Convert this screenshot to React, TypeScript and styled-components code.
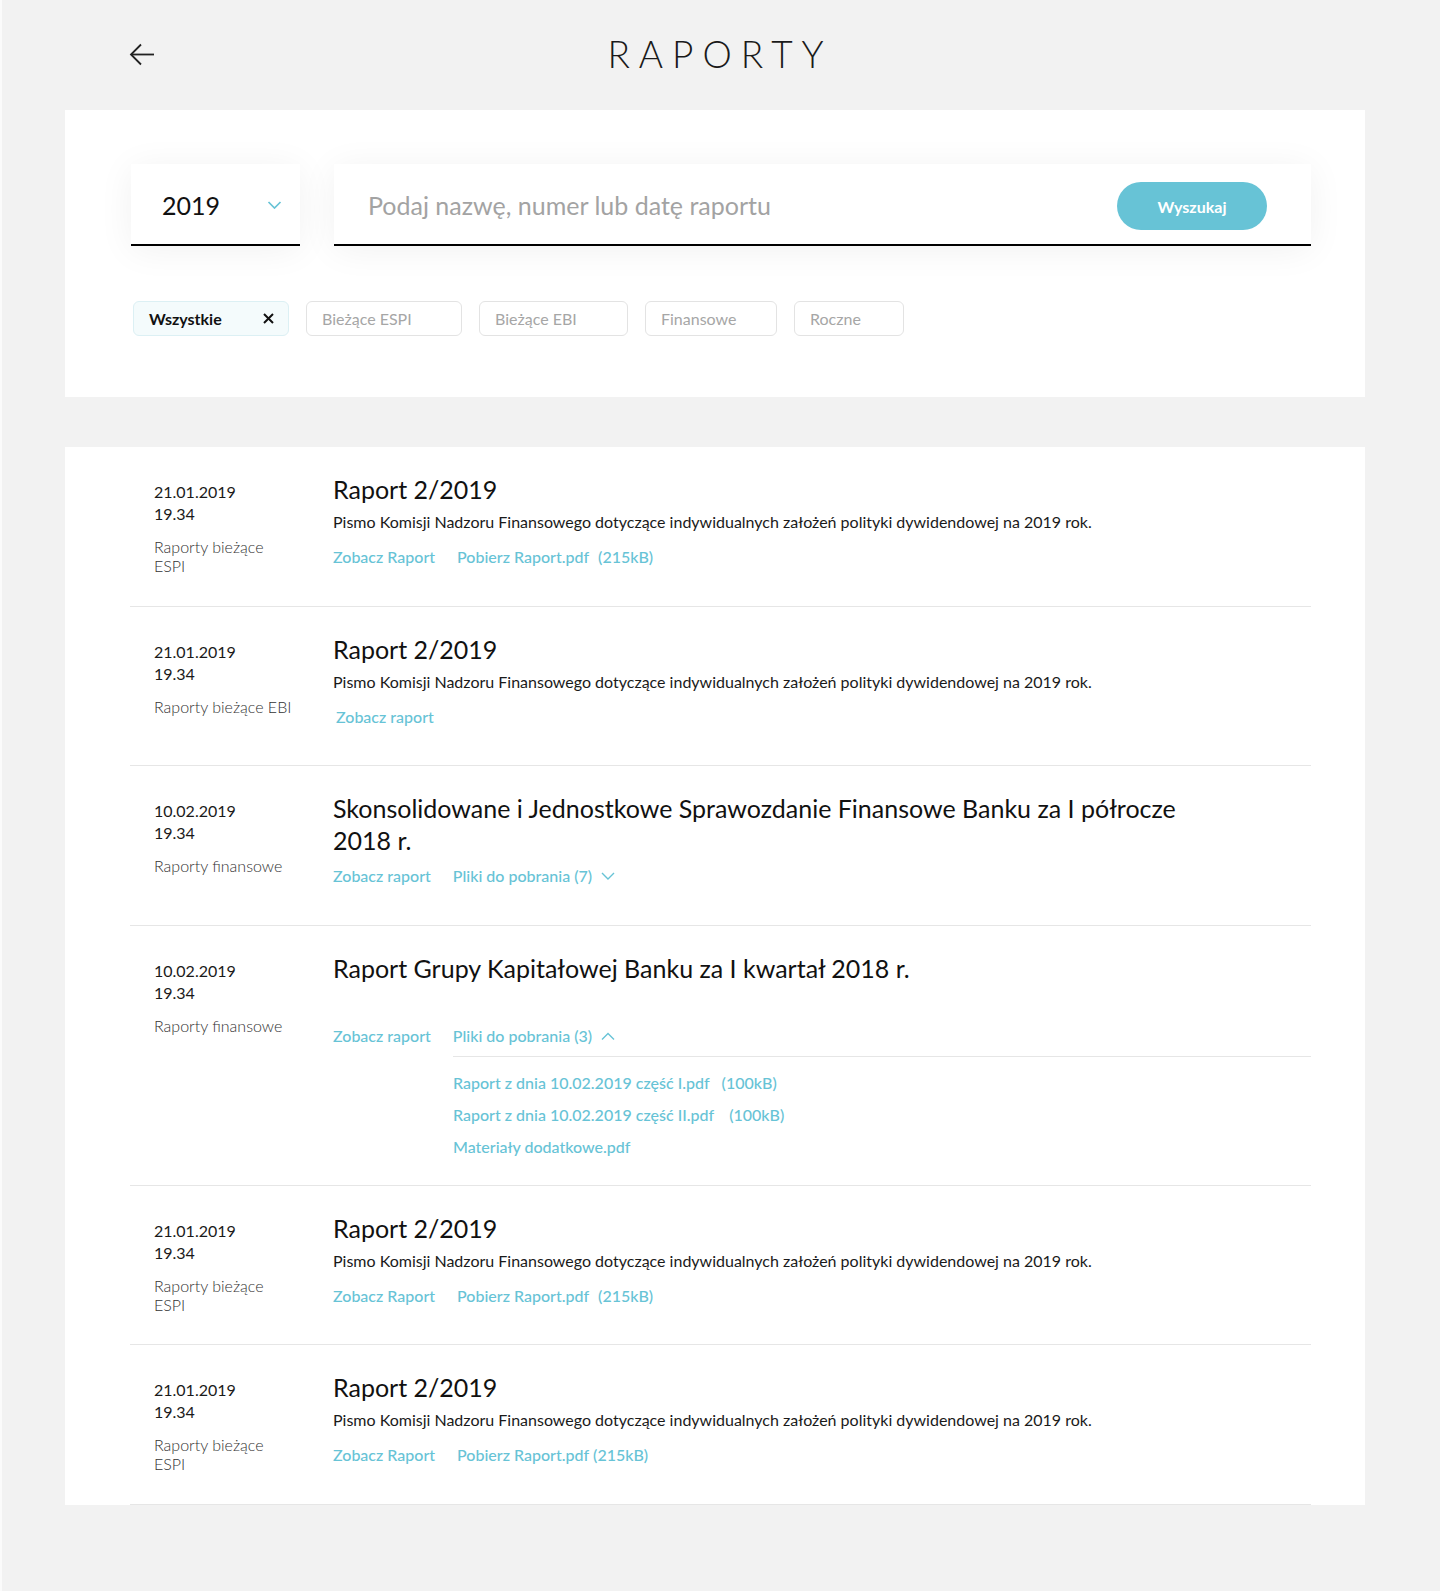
import React from "react";
import styled, { createGlobalStyle } from "styled-components";

const ACCENT = "#67c3d6";

const GlobalStyle = createGlobalStyle`
  html, body {
    margin: 0;
    padding: 0;
    background: #f2f2f2;
    font-family: Lato, "Open Sans", Arial, sans-serif;
    -webkit-font-smoothing: antialiased;
  }
  * { box-sizing: border-box; }
`;

const Page = styled.div`
  border-left: 2px solid #fbfbfb;
  padding: 0 75px 88px 63px;
  min-height: 1591px;
`;

const Header = styled.header`
  height: 110px;
  display: grid;
  grid-template-columns: 1fr auto 1fr;
  align-items: center;
  padding: 0 54px 2px 64px;
`;

const BackButton = styled.button`
  justify-self: start;
  border: 0;
  background: none;
  padding: 0;
  display: flex;
  cursor: pointer;
`;

const Title = styled.h1`
  margin: 0;
  font-weight: 300;
  font-size: 37px;
  line-height: 44px;
  letter-spacing: 9px;
  color: #1a1a1a;
`;

const FilterPanel = styled.section`
  background: #fff;
  padding: 54px 54px 61px 66px;
`;

const SearchRow = styled.div`
  display: flex;
  gap: 34px;
`;

const YearSelect = styled.div`
  width: 169px;
  height: 82px;
  background: #fff;
  border-bottom: 2px solid #000;
  box-shadow: 0 4px 36px rgba(0, 0, 0, 0.06);
  display: flex;
  align-items: center;
  justify-content: space-between;
  padding: 2px 18px 0 31px;
  cursor: pointer;
`;

const YearValue = styled.span`
  font-size: 25px;
  line-height: 32px;
  color: #111;
`;

const SearchBox = styled.div`
  flex: 1;
  height: 82px;
  background: #fff;
  border-bottom: 2px solid #000;
  box-shadow: 0 4px 36px rgba(0, 0, 0, 0.06);
  display: flex;
  align-items: center;
  padding: 2px 44px 0 34px;
`;

const SearchInput = styled.input`
  flex: 1;
  border: 0;
  outline: none;
  font-family: inherit;
  font-size: 25px;
  line-height: 32px;
  color: #111;
  padding: 0;
  background: transparent;
  &::placeholder {
    color: #a3a3a3;
  }
`;

const SearchButton = styled.button`
  width: 150px;
  height: 48px;
  margin-top: 2px;
  border: 0;
  border-radius: 24px;
  background: ${ACCENT};
  color: #fff;
  font-family: inherit;
  font-weight: 700;
  font-size: 16px;
  cursor: pointer;
`;

const ChipRow = styled.div`
  margin-top: 55px;
  padding-left: 2px;
  display: flex;
  gap: 17px;
`;

const Chip = styled.button<{ $active?: boolean; $w: number }>`
  width: ${(p) => p.$w}px;
  height: 35px;
  border-radius: 6px;
  border: 1px solid ${(p) => (p.$active ? "#dcf0f4" : "#e3e3e3")};
  background: ${(p) => (p.$active ? "#f4fbfc" : "#fff")};
  color: ${(p) => (p.$active ? "#111" : "#a6a6a6")};
  font-family: inherit;
  font-size: 16px;
  font-weight: ${(p) => (p.$active ? 700 : 400)};
  display: flex;
  align-items: center;
  justify-content: space-between;
  padding: 0 14px 0 15px;
  cursor: pointer;
`;

const ListPanel = styled.section`
  margin-top: 50px;
  background: #fff;
  padding: 0 54px 0 65px;
`;

const Row = styled.article`
  display: grid;
  grid-template-columns: 179px 1fr;
  min-height: 159.5px;
  padding: 26px 0 27px 24px;
  border-bottom: 1px solid #e6e6e6;
`;

const Meta = styled.div`
  padding-top: 8px;
`;

const DateLine = styled.div`
  font-size: 16px;
  line-height: 22px;
  color: #1a1a1a;
`;

const Category = styled.div`
  margin-top: 12px;
  max-width: 140px;
  font-size: 16px;
  line-height: 19px;
  font-weight: 300;
  color: #333;
`;

const Body = styled.div``;

const Heading = styled.div`
  min-height: 64px;
`;

const ReportTitle = styled.h2`
  margin: 0;
  max-width: 860px;
  font-size: 25px;
  line-height: 32px;
  font-weight: 400;
  color: #111;
`;

const Description = styled.p`
  margin: 6px 0 0;
  font-size: 16px;
  line-height: 22px;
  color: #1a1a1a;
`;

const Links = styled.div`
  margin-top: 9px;
  display: flex;
  gap: 22px;
  align-items: center;
`;

const Link = styled.a<{ $shift?: number }>`
  font-size: 16px;
  line-height: 22px;
  font-weight: 500;
  color: ${ACCENT};
  text-decoration: none;
  cursor: pointer;
  display: inline-flex;
  align-items: center;
  margin-left: ${(p) => p.$shift ?? 0}px;
`;

const Size = styled.span<{ $gap: number }>`
  margin-left: ${(p) => p.$gap}px;
`;

const ToggleIcon = styled.span`
  display: inline-flex;
  margin-left: 9px;
`;

const Divider = styled.div`
  margin: 9px 0 0 120px;
  border-top: 1px solid #e6e6e6;
`;

const FileList = styled.div`
  margin: 15px 0 0 120px;
  display: flex;
  flex-direction: column;
  gap: 10px;
  align-items: flex-start;
`;

const Arrow = () => (
  <svg width="26" height="23" viewBox="0 0 26 23" fill="none">
    <path d="M2 11.5H25" stroke="#222" strokeWidth="1.8" />
    <path d="M12 1.5L2 11.5L12 21.5" stroke="#222" strokeWidth="1.8" />
  </svg>
);

const Chevron = ({
  up = false,
  width = 14,
  stroke = 1.4,
}: {
  up?: boolean;
  width?: number;
  stroke?: number;
}) => (
  <svg width={width} height="8" viewBox="0 0 14 8" fill="none">
    <path
      d={up ? "M1 7.5L7 1.5L13 7.5" : "M1 1L7 7L13 1"}
      stroke={ACCENT}
      strokeWidth={stroke}
    />
  </svg>
);

const CloseIcon = () => (
  <svg width="11" height="11" viewBox="0 0 11 11" fill="none">
    <path d="M1 1L10 10M10 1L1 10" stroke="#111" strokeWidth="2" />
  </svg>
);

type FileItem = { name: string; size?: string; gap?: number };

type Report = {
  date: string;
  time: string;
  category: string;
  title: string;
  description?: string;
  links: React.ReactNode;
  files?: FileItem[];
};

const DESC =
  "Pismo Komisji Nadzoru Finansowego dotyczące indywidualnych założeń polityki dywidendowej na 2019 rok.";

const reports: Report[] = [
  {
    date: "21.01.2019",
    time: "19.34",
    category: "Raporty bieżące ESPI",
    title: "Raport 2/2019",
    description: DESC,
    links: (
      <>
        <Link>Zobacz Raport</Link>
        <Link>
          Pobierz Raport.pdf<Size $gap={9}>(215kB)</Size>
        </Link>
      </>
    ),
  },
  {
    date: "21.01.2019",
    time: "19.34",
    category: "Raporty bieżące EBI",
    title: "Raport 2/2019",
    description: DESC,
    links: <Link $shift={3}>Zobacz raport</Link>,
  },
  {
    date: "10.02.2019",
    time: "19.34",
    category: "Raporty finansowe",
    title:
      "Skonsolidowane i Jednostkowe Sprawozdanie Finansowe Banku za I półrocze 2018 r.",
    links: (
      <>
        <Link>Zobacz raport</Link>
        <Link>
          Pliki do pobrania (7)
          <ToggleIcon>
            <Chevron />
          </ToggleIcon>
        </Link>
      </>
    ),
  },
  {
    date: "10.02.2019",
    time: "19.34",
    category: "Raporty finansowe",
    title: "Raport Grupy Kapitałowej Banku za I kwartał 2018 r.",
    links: (
      <>
        <Link>Zobacz raport</Link>
        <Link>
          Pliki do pobrania (3)
          <ToggleIcon>
            <Chevron up />
          </ToggleIcon>
        </Link>
      </>
    ),
    files: [
      { name: "Raport z dnia 10.02.2019 część I.pdf", size: "(100kB)", gap: 12 },
      { name: "Raport z dnia 10.02.2019 część II.pdf", size: "(100kB)", gap: 15 },
      { name: "Materiały dodatkowe.pdf" },
    ],
  },
  {
    date: "21.01.2019",
    time: "19.34",
    category: "Raporty bieżące ESPI",
    title: "Raport 2/2019",
    description: DESC,
    links: (
      <>
        <Link>Zobacz Raport</Link>
        <Link>
          Pobierz Raport.pdf<Size $gap={9}>(215kB)</Size>
        </Link>
      </>
    ),
  },
  {
    date: "21.01.2019",
    time: "19.34",
    category: "Raporty bieżące ESPI",
    title: "Raport 2/2019",
    description: DESC,
    links: (
      <>
        <Link>Zobacz Raport</Link>
        <Link>
          Pobierz Raport.pdf<Size $gap={4}>(215kB)</Size>
        </Link>
      </>
    ),
  },
];

const chips = [
  { label: "Wszystkie", w: 156, active: true },
  { label: "Bieżące ESPI", w: 156 },
  { label: "Bieżące EBI", w: 149 },
  { label: "Finansowe", w: 132 },
  { label: "Roczne", w: 110 },
];

export default function App() {
  return (
    <>
      <GlobalStyle />
      <Page>
        <Header>
          <BackButton aria-label="Wstecz">
            <Arrow />
          </BackButton>
          <Title>RAPORTY</Title>
          <span />
        </Header>

        <FilterPanel>
          <SearchRow>
            <YearSelect>
              <YearValue>2019</YearValue>
              <Chevron width={15} stroke={1.7} />
            </YearSelect>
            <SearchBox>
              <SearchInput placeholder="Podaj nazwę, numer lub datę raportu" />
              <SearchButton>Wyszukaj</SearchButton>
            </SearchBox>
          </SearchRow>
          <ChipRow>
            {chips.map((c) => (
              <Chip key={c.label} $active={c.active} $w={c.w}>
                {c.label}
                {c.active && <CloseIcon />}
              </Chip>
            ))}
          </ChipRow>
        </FilterPanel>

        <ListPanel>
          {reports.map((r, i) => (
            <Row key={i}>
              <Meta>
                <DateLine>{r.date}</DateLine>
                <DateLine>{r.time}</DateLine>
                <Category>{r.category}</Category>
              </Meta>
              <Body>
                <Heading>
                  <ReportTitle>{r.title}</ReportTitle>
                  {r.description && <Description>{r.description}</Description>}
                </Heading>
                <Links>{r.links}</Links>
                {r.files && (
                  <>
                    <Divider />
                    <FileList>
                      {r.files.map((f) => (
                        <Link key={f.name}>
                          {f.name}
                          {f.size && <Size $gap={f.gap ?? 12}>{f.size}</Size>}
                        </Link>
                      ))}
                    </FileList>
                  </>
                )}
              </Body>
            </Row>
          ))}
        </ListPanel>
      </Page>
    </>
  );
}
